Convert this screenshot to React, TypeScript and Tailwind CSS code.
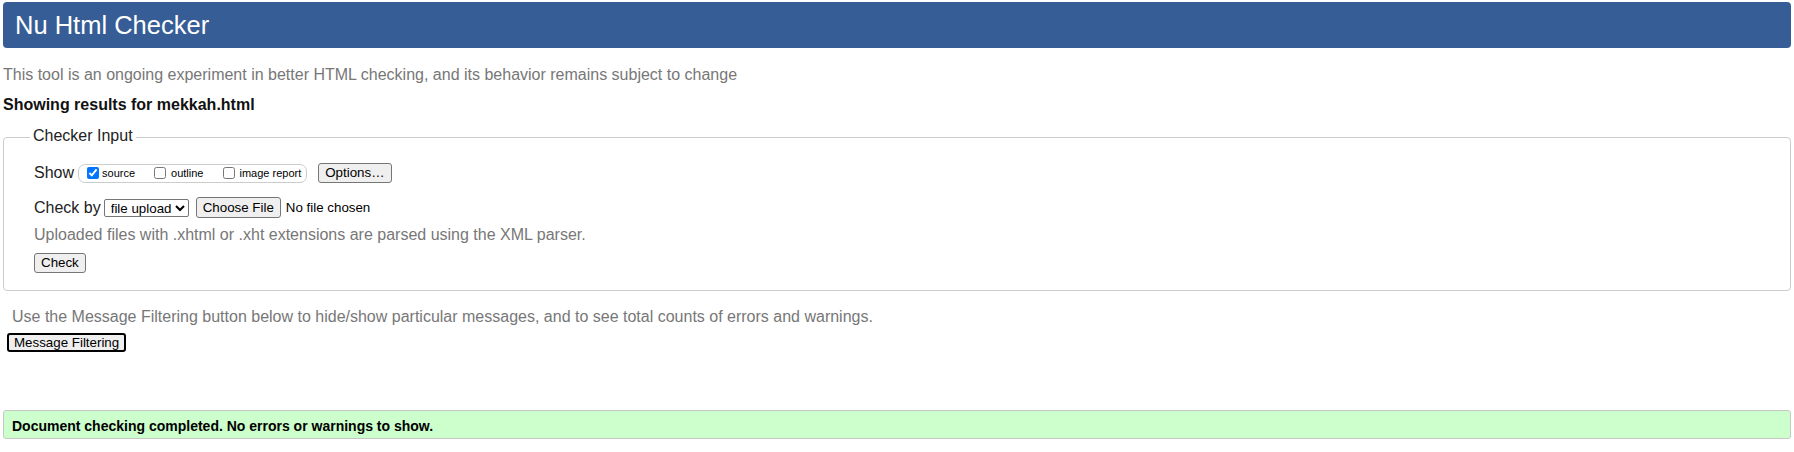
import { useState } from "react";

const btn =
  "bg-[#efefef] border border-[#767676] rounded-[3px] px-[6px] text-[13.33px] leading-[16px] text-black";

export default function App() {
  const [show, setShow] = useState({ source: true, outline: false, image: false });

  return (
    <div className="min-h-screen bg-white px-[3px] pt-[2px] font-['Liberation_Sans',Arial,sans-serif] text-black">
      {/* Header bar */}
      <header className="h-[46px] rounded-[4px] bg-[#365d95] flex items-center pl-[12px]">
        <h1 className="text-[25.5px] text-white font-normal">Nu Html Checker</h1>
      </header>

      <p className="mt-[18px] text-[16px] leading-[18px] text-[#777]">
        This tool is an ongoing experiment in better HTML checking, and its behavior remains subject to change
      </p>
      <p className="mt-[12px] text-[16px] leading-[18px] font-bold text-[#111]">
        Showing results for mekkah.html
      </p>

      {/* Checker input */}
      <fieldset className="mt-[13px] border border-[#ccc] rounded-[4px] pl-[26px] pr-4 pt-[16px] pb-[17px]">
        <legend className="px-[3px] pb-[2px] text-[16px] leading-[18px] text-[#222]">Checker Input</legend>

        <div className="pl-[4px] h-[20px] flex items-center">
          <span className="text-[16px] text-[#222]">Show</span>
          <div className="ml-[4px] h-[19px] border border-[#ccc] rounded-[7px] flex items-center pl-[8px] pr-[5px] text-[11px]">
            <input
              type="checkbox"
              checked={show.source}
              onChange={() => setShow({ ...show, source: !show.source })}
              className="m-0 w-[12px] h-[12px]"
            />
            <span className="ml-[3px]">source</span>
            <input
              type="checkbox"
              checked={show.outline}
              onChange={() => setShow({ ...show, outline: !show.outline })}
              className="m-0 ml-[19px] w-[12px] h-[12px]"
            />
            <span className="ml-[5px]">outline</span>
            <input
              type="checkbox"
              checked={show.image}
              onChange={() => setShow({ ...show, image: !show.image })}
              className="m-0 ml-[20px] w-[12px] h-[12px]"
            />
            <span className="ml-[4px]">image report</span>
          </div>
          <button className={`${btn} ml-[11px] h-[20px]`}>Options…</button>
        </div>

        <div className="pl-[4px] mt-[14px] h-[21px] flex items-center">
          <span className="text-[16px] text-[#222]">Check by</span>
          <select className="ml-[3px] h-[18px] border border-[#767676] rounded-[2px] bg-white text-[13.33px] leading-[16px] pl-[2px]">
            <option>file upload</option>
            <option>address</option>
            <option>text input</option>
          </select>
          <button className={`${btn} ml-[7px] h-[21px]`}>Choose File</button>
          <span className="ml-[5px] text-[13.33px]">No file chosen</span>
        </div>

        <p className="pl-[4px] mt-[8px] text-[16px] leading-[18px] text-[#777]">
          Uploaded files with .xhtml or .xht extensions are parsed using the XML parser.
        </p>

        <div className="pl-[4px] mt-[9px] flex">
          <button className={`${btn} h-[20px]`}>Check</button>
        </div>
      </fieldset>

      <p className="mt-[17px] pl-[9px] text-[16px] leading-[18px] text-[#777]">
        Use the Message Filtering button below to hide/show particular messages, and to see total counts of errors and warnings.
      </p>
      <div className="mt-[7px] pl-[4px] flex">
        <button className="h-[19px] border-2 border-black rounded-[3px] bg-[#efefef] px-[5px] text-[13.33px] leading-[14px]">
          Message Filtering
        </button>
      </div>

      {/* Result */}
      <div className="mt-[58px] border border-[#c6c6c6] rounded-[3px] bg-[#ccffcc] pl-[8px] pt-[7px] pb-[4px] text-[14px] leading-[16px] font-bold">
        Document checking completed. No errors or warnings to show.
      </div>
    </div>
  );
}
